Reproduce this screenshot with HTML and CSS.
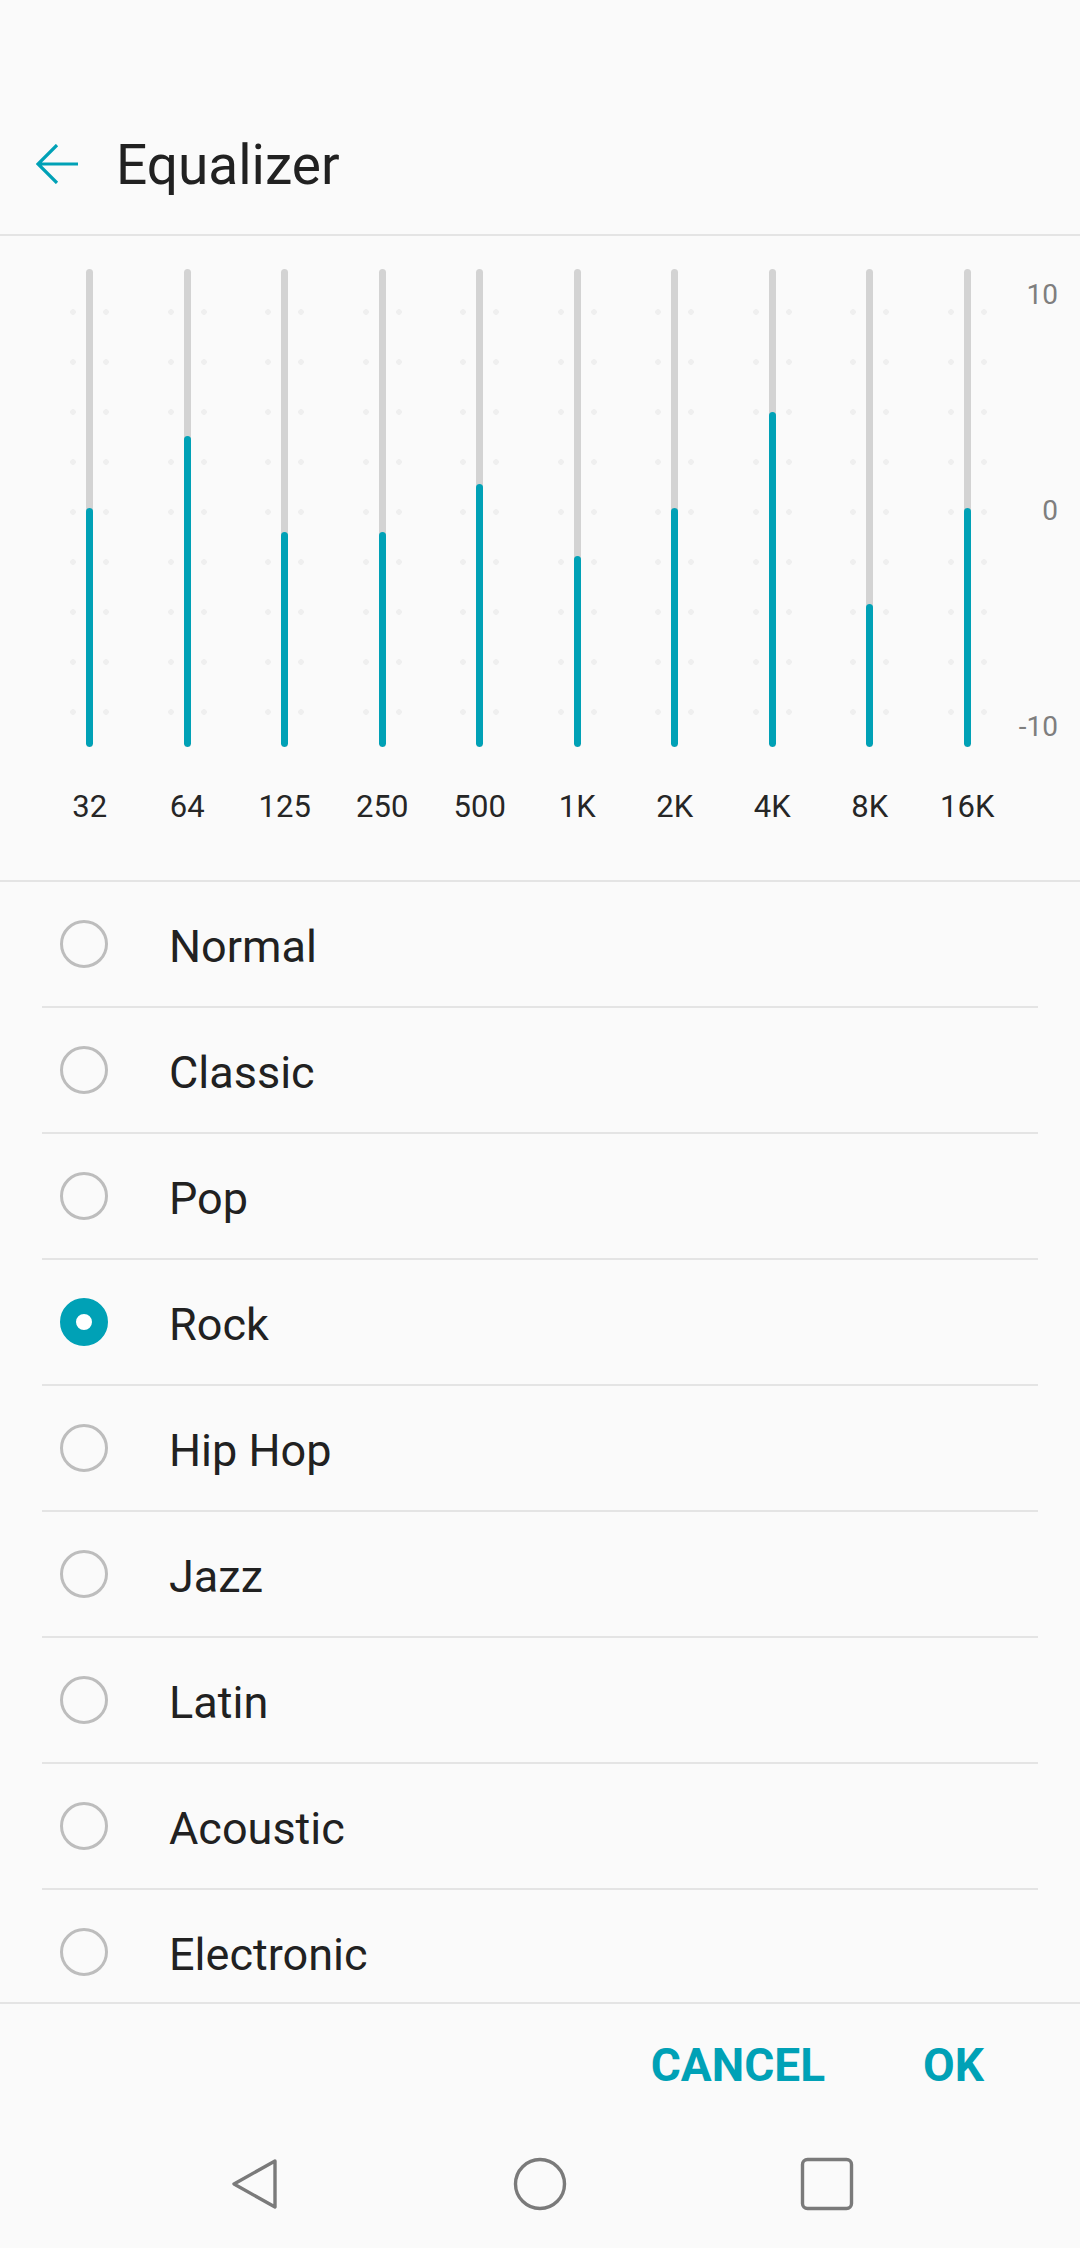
FILE: index.html
```html
<!DOCTYPE html>
<html lang="en">
<head>
<meta charset="utf-8">
<title>Equalizer</title>
<link rel="stylesheet" href="styles.css">
</head>
<body>
<div class="screen">
  <header class="appbar">
    <svg class="back" width="44" height="40" viewBox="0 0 44 40">
      <path d="M2 20 H42 M21 1 L2 20 L21 39" fill="none" stroke="#00a1b6" stroke-width="3.2" stroke-linecap="butt" stroke-linejoin="miter"/>
    </svg>
    <h1 class="title">Equalizer</h1>
  </header>

  <section class="eq">
    <div class="bands">
      <div class="band"><div class="slider"><div class="track"><div class="fill" style="height:239px"></div></div></div><span class="freq">32</span></div>
      <div class="band"><div class="slider"><div class="track"><div class="fill" style="height:311px"></div></div></div><span class="freq">64</span></div>
      <div class="band"><div class="slider"><div class="track"><div class="fill" style="height:215px"></div></div></div><span class="freq">125</span></div>
      <div class="band"><div class="slider"><div class="track"><div class="fill" style="height:215px"></div></div></div><span class="freq">250</span></div>
      <div class="band"><div class="slider"><div class="track"><div class="fill" style="height:263px"></div></div></div><span class="freq">500</span></div>
      <div class="band"><div class="slider"><div class="track"><div class="fill" style="height:191px"></div></div></div><span class="freq">1K</span></div>
      <div class="band"><div class="slider"><div class="track"><div class="fill" style="height:239px"></div></div></div><span class="freq">2K</span></div>
      <div class="band"><div class="slider"><div class="track"><div class="fill" style="height:335px"></div></div></div><span class="freq">4K</span></div>
      <div class="band"><div class="slider"><div class="track"><div class="fill" style="height:143px"></div></div></div><span class="freq">8K</span></div>
      <div class="band"><div class="slider"><div class="track"><div class="fill" style="height:239px"></div></div></div><span class="freq">16K</span></div>
    </div>
    <div class="scale">
      <span>10</span>
      <span>0</span>
      <span>-10</span>
    </div>
  </section>

  <ul class="presets">
    <li class="preset"><span class="radio"></span><span class="name">Normal</span></li>
    <li class="preset"><span class="radio"></span><span class="name">Classic</span></li>
    <li class="preset"><span class="radio"></span><span class="name">Pop</span></li>
    <li class="preset"><span class="radio checked"></span><span class="name">Rock</span></li>
    <li class="preset"><span class="radio"></span><span class="name">Hip Hop</span></li>
    <li class="preset"><span class="radio"></span><span class="name">Jazz</span></li>
    <li class="preset"><span class="radio"></span><span class="name">Latin</span></li>
    <li class="preset"><span class="radio"></span><span class="name">Acoustic</span></li>
    <li class="preset"><span class="radio"></span><span class="name">Electronic</span></li>
  </ul>

  <div class="actions">
    <button class="btn">CANCEL</button>
    <button class="btn">OK</button>
  </div>

  <nav class="navbar">
    <svg width="50" height="54" viewBox="0 0 50 54">
      <path d="M45 4 L4 27 L45 50 Z" fill="none" stroke="#7a7a7a" stroke-width="3.4" stroke-linejoin="round"/>
    </svg>
    <svg width="54" height="54" viewBox="0 0 54 54">
      <circle cx="27" cy="27" r="24.5" fill="none" stroke="#7a7a7a" stroke-width="3.4"/>
    </svg>
    <svg width="54" height="54" viewBox="0 0 54 54">
      <rect x="2.5" y="2.5" width="49" height="49" rx="5" fill="none" stroke="#7a7a7a" stroke-width="3.4"/>
    </svg>
  </nav>
</div>
</body>
</html>
```

FILE: styles.css
```css
* {
  box-sizing: border-box;
}

html, body {
  margin: 0;
  padding: 0;
  background: #fafafa;
}

body {
  font-family: Roboto, "Liberation Sans", Arial, sans-serif;
  color: #212121;
}

.screen {
  width: 1080px;
  height: 2248px;
  overflow: hidden;
  display: flex;
  flex-direction: column;
  background: #fafafa;
}

/* App bar */
.appbar {
  height: 236px;
  flex: none;
  display: flex;
  align-items: center;
  padding: 93px 0 0 36px;
  border-bottom: 2px solid #e4e4e4;
}

.back {
  flex: none;
  display: block;
}

.title {
  margin: 0 0 0 36px;
  font-size: 55px;
  font-weight: 400;
  color: #212121;
  line-height: 1;
  padding-top: 4px;
}

/* Equalizer */
.eq {
  flex: none;
  height: 646px;
  display: flex;
  padding: 33px 22px 0 41px;
  border-bottom: 2px solid #e4e4e4;
}

.bands {
  flex: 1;
  display: flex;
}

.band {
  flex: 1;
  display: flex;
  flex-direction: column;
  align-items: center;
}

.slider {
  width: 39px;
  height: 478px;
  display: flex;
  justify-content: center;
  background-image: radial-gradient(circle 3px at 3px 3px, #efefef 90%, rgba(239,239,239,0) 100%);
  background-size: 33px 50px;
  background-position: 0 40px;
  background-repeat: repeat;
}

.track {
  width: 7px;
  height: 100%;
  background: #d3d3d3;
  border-radius: 4px;
  display: flex;
  flex-direction: column;
  justify-content: flex-end;
  overflow: hidden;
}

.fill {
  width: 100%;
  background: #00a1b6;
  border-radius: 4px;
}

.freq {
  margin-top: 40px;
  font-size: 31px;
  line-height: 40px;
  color: #262626;
}

.scale {
  width: 42px;
  height: 478px;
  display: flex;
  flex-direction: column;
  justify-content: space-between;
  align-items: flex-end;
  padding: 10px 0 4px;
  font-size: 28px;
  line-height: 32px;
  color: #7e7e7e;
}

/* Presets list */
.presets {
  list-style: none;
  margin: 0;
  padding: 0;
  height: 1122px;
  flex: none;
  overflow: hidden;
  border-bottom: 2px solid #e4e4e4;
}

.preset {
  margin: 0 42px;
  height: 126px;
  display: flex;
  align-items: center;
  border-bottom: 2px solid #e4e4e4;
}

.radio {
  flex: none;
  width: 48px;
  height: 48px;
  margin-left: 18px;
  border: 3.5px solid #bdbdbd;
  border-radius: 50%;
}

.radio.checked {
  border: 16px solid #00a1b6;
  background: #ffffff;
}

.name {
  margin-left: 61px;
  padding-top: 4px;
  font-size: 45px;
  line-height: 1;
  color: #212121;
}

/* Dialog actions */
.actions {
  flex: none;
  height: 116px;
  display: flex;
  justify-content: flex-end;
  align-items: center;
  gap: 98px;
  padding: 5px 96px 0 0;
}

.btn {
  border: 0;
  background: none;
  padding: 0;
  font-family: Roboto, "Liberation Sans", Arial, sans-serif;
  font-size: 46px;
  font-weight: 700;
  line-height: 1;
  color: #00a1b6;
  letter-spacing: 0;
}

/* Navigation bar */
.navbar {
  flex: none;
  height: 128px;
  display: flex;
  align-items: center;
  padding: 0 0 0 230px;
  gap: 233px;
}

.navbar svg {
  display: block;
}
```
